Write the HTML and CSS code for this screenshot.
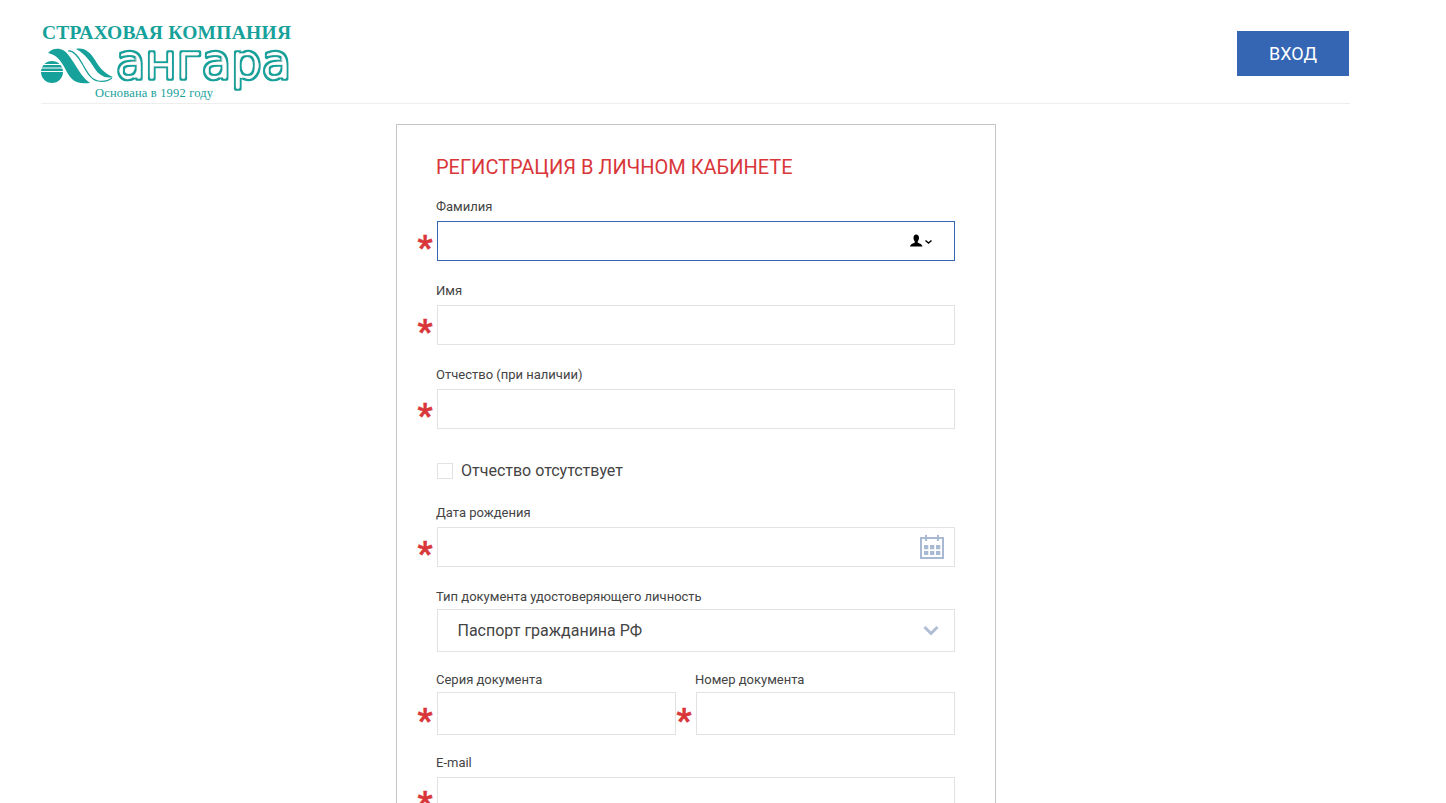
FILE: index.html
```
<!DOCTYPE html>
<html>
<head>
  <title>Регистрация в личном кабинете</title>
  <link rel="stylesheet" href="styles.css">
</head>
<body>
  <div class="page">
    <div class="header">
      <svg class="logo" viewBox="41 20 252 82" width="252" height="82">
        <defs>
          <filter id="tube" x="-5%" y="-5%" width="110%" height="110%">
            <feMorphology in="SourceAlpha" operator="erode" radius="1.7" result="inner"/>
            <feFlood flood-color="white"/>
            <feComposite in2="inner" operator="in" result="core"/>
            <feMerge>
              <feMergeNode in="SourceGraphic"/>
              <feMergeNode in="core"/>
            </feMerge>
          </filter>
        </defs>
        <text class="logo-company" x="42" y="38.500" textLength="249">СТРАХОВАЯ КОМПАНИЯ</text>
        <circle class="logo-fill" cx="52" cy="72" r="11"/>
        <path class="logo-cut" d="M41 64.500H63M41 68H63M41 71.500H63"/>
        <path class="logo-fill" d="M48 53C51 49 56 48 60 49C66 50 70 57 74 63C79 71 83 78 90 83C82 84 76 83 72 79C67 74 65 67 61 62C58 57 53 54 48 53Z"/>
        <path class="logo-line" d="M68 51C74 50 79 58 83 65C87 72 91 80 98 81C103 82 108 81 112 78"/>
        <path class="logo-fill" d="M76 49C84 47 90 52 95 60C99 67 104 73 113 77C105 79 99 75 95 69C91 63 86 54 76 49Z"/>
        <text class="logo-name" x="116" y="78.500" textLength="175" lengthAdjust="spacingAndGlyphs" filter="url(#tube)">ангара</text>
        <text class="logo-since" x="95" y="97" textLength="118">Основана в 1992 году</text>
      </svg>
      <button class="login-btn">ВХОД</button>
    </div>

    <div class="card">
      <div class="card-title">РЕГИСТРАЦИЯ В ЛИЧНОМ КАБИНЕТЕ</div>

      <div class="field">
        <label>Фамилия</label>
        <div class="control required">
          <input type="text" class="input input-active">
          <svg class="contact-icon" viewBox="0 0 23 13" width="23" height="13">
            <path d="M6 0.500C8 0.500 9 2 9 4C9 5.500 8.300 6.800 7.700 7.500V8.500C9 9.500 12 9.800 12.500 12.500H0C0.500 9.800 3.500 9.500 4.800 8.500V7.500C4.200 6.800 3.500 5.500 3.500 4C3.500 2 4.500 0.500 6 0.500Z"/>
            <path class="contact-arrow" d="M15.500 6.500L18.500 9L21.500 6.500"/>
          </svg>
        </div>
      </div>

      <div class="field">
        <label>Имя</label>
        <div class="control required">
          <input type="text" class="input">
        </div>
      </div>

      <div class="field">
        <label>Отчество (при наличии)</label>
        <div class="control required">
          <input type="text" class="input">
        </div>
      </div>

      <label class="check-row">
        <input type="checkbox" class="check">
        <span>Отчество отсутствует</span>
      </label>

      <div class="field">
        <label>Дата рождения</label>
        <div class="control required">
          <input type="text" class="input">
          <svg class="calendar-icon" viewBox="0 0 24 24" width="24" height="24">
            <path class="calendar-frame" d="M1 3H23V23H1Z"/>
            <path class="calendar-mark" d="M5 0H7V6H5ZM17 0H19V6H17Z"/>
            <path class="calendar-mark" d="M4 10H8.300V14.300H4ZM10 10H14.300V14.300H10ZM16 10H20.300V14.300H16ZM4 16H8.300V20H4ZM10 16H14.300V20H10ZM16 16H20.300V20H16Z"/>
          </svg>
        </div>
      </div>

      <div class="field field-tall">
        <label>Тип документа удостоверяющего личность</label>
        <div class="control">
          <select class="input select">
            <option>Паспорт гражданина РФ</option>
          </select>
          <svg class="select-arrow" viewBox="0 0 16 11" width="16" height="11">
            <path d="M1.500 2L8 8.500L14.500 2"/>
          </svg>
        </div>
      </div>

      <div class="field-row">
        <div class="field field-tall">
          <label>Серия документа</label>
          <div class="control required">
            <input type="text" class="input">
          </div>
        </div>
        <div class="field field-tall">
          <label>Номер документа</label>
          <div class="control required">
            <input type="text" class="input">
          </div>
        </div>
      </div>

      <div class="field">
        <label>E-mail</label>
        <div class="control required">
          <input type="text" class="input">
        </div>
      </div>
    </div>
  </div>
</body>
</html>
```

FILE: styles.css
```
html, body {
  height: 803px;
  overflow: hidden;
}

body {
  font-family: Roboto, "Liberation Sans", sans-serif;
  margin: 0;
  padding: 0;
  background-color: white;
  color: #444;
}

.page {
  width: 1310px;
  margin-left: 41px;
}

.header {
  display: flex;
  justify-content: space-between;
  align-items: flex-start;
  height: 103px;
  margin-right: 1px;
  border-bottom: 1px solid #eeeeee;
}

.logo {
  display: block;
  margin-top: 20px;
  overflow: visible;
}

.logo-company {
  font-family: "Liberation Serif", serif;
  font-weight: bold;
  font-size: 19.5px;
  fill: #16a19b;
}

.logo-since {
  font-family: "Liberation Serif", serif;
  font-size: 12.5px;
  fill: #16a19b;
}

.logo-name {
  font-family: "DejaVu Sans", sans-serif;
  font-size: 50px;
  fill: #16a19b;
  stroke: #16a19b;
  stroke-width: 3.5;
  stroke-linejoin: round;
}

.logo-fill {
  fill: #16a19b;
}

.logo-cut {
  fill: none;
  stroke: white;
  stroke-width: 1.2;
}

.logo-line {
  fill: none;
  stroke: #16a19b;
  stroke-width: 1.2;
}

.login-btn {
  width: 112px;
  height: 45px;
  margin-top: 31px;
  margin-right: 1px;
  background-color: #3466b4;
  border: none;
  color: white;
  font-family: inherit;
  font-size: 18px;
  cursor: pointer;
}

.card {
  width: 519px;
  margin: 20px auto 0;
  padding: 30px 40px 40px 39px;
  border: 1px solid #c4c4c4;
}

.card-title {
  font-size: 20px;
  line-height: 24px;
  color: #d9363a;
  margin-bottom: 19px;
}

.field {
  margin-bottom: 21px;
}

.field label {
  display: block;
  font-size: 13px;
  line-height: 18px;
  margin-bottom: 5px;
}

.field-tall {
  margin-bottom: 19px;
}

.field-tall label {
  margin-bottom: 3px;
}

.field-row {
  display: grid;
  grid-template-columns: 259px 260px;
}

.field-row .field:first-child .control {
  margin-right: 19px;
}

.control {
  position: relative;
  margin-left: 1px;
}

.required::before {
  content: "*";
  position: absolute;
  left: -19.5px;
  top: 50%;
  margin-top: -13px;
  font-weight: bold;
  font-size: 33px;
  line-height: 40px;
  color: #d9363a;
  -webkit-text-stroke: 0.5px #d9363a;
}

.input {
  display: block;
  width: 100%;
  height: 40px;
  box-sizing: border-box;
  padding: 0 20px;
  background-color: white;
  border: 1px solid #e2e2e2;
  border-radius: 0;
  outline: none;
  font-family: inherit;
  font-size: 16px;
  color: #444;
}

.field-tall .input {
  height: 43px;
}

.input-active {
  border-color: #3466b4;
}

.select {
  appearance: none;
  padding-left: 19.5px;
}

.check-row {
  display: flex;
  align-items: center;
  height: 16px;
  margin: 34px 0 25px 1px;
  font-size: 16px;
}

.check-row span {
  margin-bottom: 2px;
}

.check {
  appearance: none;
  width: 16px;
  height: 16px;
  margin: 0 8px 0 0;
  background-color: white;
  border: 1px solid #e2e2e2;
}

.contact-icon {
  position: absolute;
  right: 22px;
  top: 13px;
}

.contact-arrow {
  fill: none;
  stroke: black;
  stroke-width: 1.5;
}

.calendar-icon {
  position: absolute;
  right: 11px;
  top: 8px;
}

.calendar-frame {
  fill: none;
  stroke: #a9b8d3;
  stroke-width: 2;
}

.calendar-mark {
  fill: #a9b8d3;
}

.select-arrow {
  position: absolute;
  right: 16px;
  top: 16px;
  pointer-events: none;
}

.select-arrow path {
  fill: none;
  stroke: #b0bdd5;
  stroke-width: 3;
}
```
